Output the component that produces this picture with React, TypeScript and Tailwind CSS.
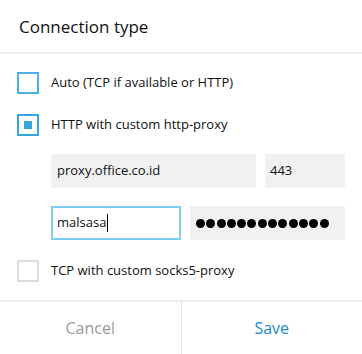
import React from "react";

const Box: React.FC<{ state: "empty" | "checked" | "off" }> = ({ state }) => (
  <span
    className={`flex h-[22px] w-[22px] shrink-0 items-center justify-center border-2 ${
      state === "off" ? "border-[#dcdcdc]" : state === "checked" ? "border-[#35a6de]" : "border-[#4aafe2]"
    }`}
  >
    {state === "checked" && <span className="h-2 w-2 bg-[#35a6de]" />}
  </span>
);

const App: React.FC = () => (
  <div className="flex h-[354px] w-[362px] flex-col bg-white font-['Open_Sans',sans-serif] text-[#111]">
    <div className="flex h-[52px] items-center px-[19px] pt-[2px] text-[17px]">Connection type</div>
    <div className="h-[2px] bg-[#ededed]" />

    <div className="flex flex-1 flex-col px-[17px]">
      <label className="mt-[18px] flex items-center gap-[12px] text-[13px]">
        <Box state="empty" /> Auto (TCP if available or HTTP)
      </label>
      <label className="mt-[20px] flex items-center gap-[12px] text-[13px]">
        <Box state="checked" /> HTTP with custom http-proxy
      </label>

      <div className="ml-[34px] mt-[18px] flex gap-[9px]">
        <div className="flex h-[34px] w-[205px] items-center bg-[#f1f1f1] px-[6px] text-[13px]">proxy.office.co.id</div>
        <div className="flex h-[34px] w-[80px] items-center bg-[#f1f1f1] px-[5px] text-[13px]">443</div>
      </div>
      <div className="ml-[34px] mt-[18px] flex gap-[9px]">
        <div className="flex h-[34px] w-[130px] items-center border-2 border-[#80cdf2] px-[4px] text-[13px]">
          malsasa<span className="ml-[1px] h-[18px] w-px bg-black" />
        </div>
        <div className="flex h-[34px] w-[155px] items-center gap-[1.3px] bg-[#f1f1f1] px-[6px]" aria-label="password">
          {Array.from({ length: 13 }).map((_, i) => (
            <span key={i} className="h-[9px] w-[9px] rounded-full bg-black" />
          ))}
        </div>
      </div>

      <label className="mt-[20px] flex items-center gap-[12px] text-[13px]">
        <Box state="off" /> TCP with custom socks5-proxy
      </label>
    </div>

    <div className="h-[2px] bg-[#ededed]" />
    <div className="flex h-[52px] text-[16px]">
      <button className="flex-1 text-[#9a9a9a]">Cancel</button>
      <div className="w-px bg-[#e3e3e3]" />
      <button className="flex-1 text-[#168acd]">Save</button>
    </div>
  </div>
);

export default App;
